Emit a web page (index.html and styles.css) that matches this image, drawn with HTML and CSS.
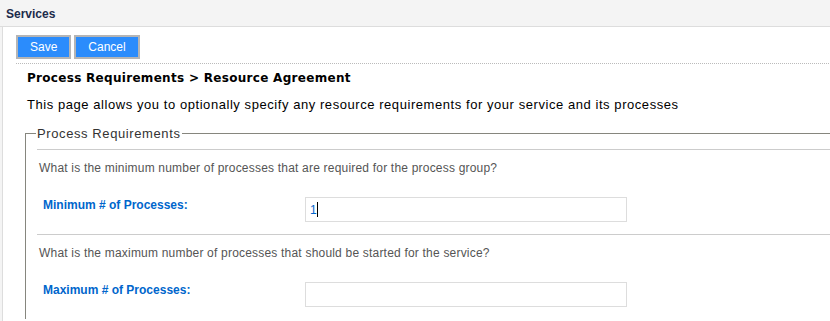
FILE: index.html
```html
<!DOCTYPE html>
<html lang="en">
<head>
    <meta charset="UTF-8">
    <meta name="viewport" content="width=device-width, initial-scale=1.0">
    <title>Services</title>
    <link rel="stylesheet" href="styles.css">
</head>
<body>
    <div class="topbar">Services</div>

    <div class="panel">
        <div class="toolbar">
            <button class="btn">Save</button>
            <button class="btn">Cancel</button>
        </div>

        <div class="content">
            <h2>Process Requirements &gt; Resource Agreement</h2>
            <p class="intro">This page allows you to optionally specify any resource requirements for your service and its processes</p>

            <fieldset class="group">
                <legend>Process Requirements</legend>

                <div class="block">
                    <p class="question">What is the minimum number of processes that are required for the process group?</p>
                    <div class="row">
                        <label for="minProc">Minimum # of Processes:</label>
                        <span class="field">
                            <input type="text" id="minProc" value="1">
                            <span class="caret"></span>
                        </span>
                    </div>
                </div>

                <div class="block">
                    <p class="question">What is the maximum number of processes that should be started for the service?</p>
                    <div class="row">
                        <label for="maxProc">Maximum # of Processes:</label>
                        <span class="field">
                            <input type="text" id="maxProc" value="">
                        </span>
                    </div>
                </div>
            </fieldset>
        </div>
    </div>
</body>
</html>
```

FILE: styles.css
```css
body {
    font-family: 'Liberation Sans', Arial, sans-serif;
    background-color: #f4f4f4;
    color: #000;
    margin: 0;
    padding: 0;
    overflow: hidden;
    height: 321px;
}
.topbar {
    box-sizing: border-box;
    height: 27px;
    padding: 6px 0 0 6px;
    font-size: 12px;
    line-height: 16px;
    font-weight: bold;
    color: #1c2b4b;
    border-bottom: 1px solid #dddddd;
}
.panel {
    margin-left: 2px;
    border-left: 1px solid #dddddd;
    background: #ffffff;
    width: 960px;
    height: 300px;
}
.toolbar {
    margin-left: 13px;
    padding: 8px 0 4px 0;
    border-bottom: 1px dotted #bbbbbb;
    display: flex;
    gap: 3px;
}
.btn {
    height: 24px;
    padding: 0 12px;
    border: 2px solid #b5b5b5;
    background-color: #2b8cfc;
    color: #ffffff;
    font-family: 'Liberation Sans', Arial, sans-serif;
    font-size: 12px;
    cursor: pointer;
}
.content {
    padding-left: 22px;
}
.content h2 {
    margin: 7px 0 0;
    padding-left: 2px;
    font-family: 'DejaVu Sans', Verdana, sans-serif;
    font-size: 12px;
    line-height: 15px;
    letter-spacing: 0.3px;
    font-weight: bold;
}
.intro {
    margin: 11px 0 0;
    padding-left: 2px;
    font-size: 13px;
    line-height: 15px;
    letter-spacing: 0.56px;
}
.group {
    margin: 14px 0 0;
    padding: 8px 0 0 11px;
    border: none;
    border-top: 1px solid #86867e;
    border-left: 1px solid #86867e;
}
.group legend {
    padding: 0 1px;
    margin-left: -1px;
    font-size: 13px;
    line-height: 15px;
    letter-spacing: 0.6px;
    color: #333333;
}
.block {
    border-top: 1px solid #cccccc;
    padding: 11px 0 12px 1px;
}
.question {
    margin: 0 0 22px;
    padding-left: 1px;
    font-size: 12px;
    line-height: 14px;
    letter-spacing: 0.2px;
    color: #555555;
}
.row {
    display: grid;
    grid-template-columns: 267px 322px;
    align-items: start;
}
.row label {
    padding: 1px 0 0 5px;
    font-size: 12px;
    line-height: 14px;
    font-weight: bold;
    color: #0066cc;
}
.field {
    position: relative;
    display: block;
}
.field input {
    display: block;
    box-sizing: border-box;
    width: 322px;
    height: 25px;
    margin: 0;
    padding: 0 4px;
    border: 1px solid #dddddd;
    outline: none;
    font-family: 'Liberation Sans', Arial, sans-serif;
    font-size: 12px;
    color: #0066cc;
}
.caret {
    position: absolute;
    left: 12px;
    top: 5px;
    width: 1px;
    height: 15px;
    background: #000000;
}
```
